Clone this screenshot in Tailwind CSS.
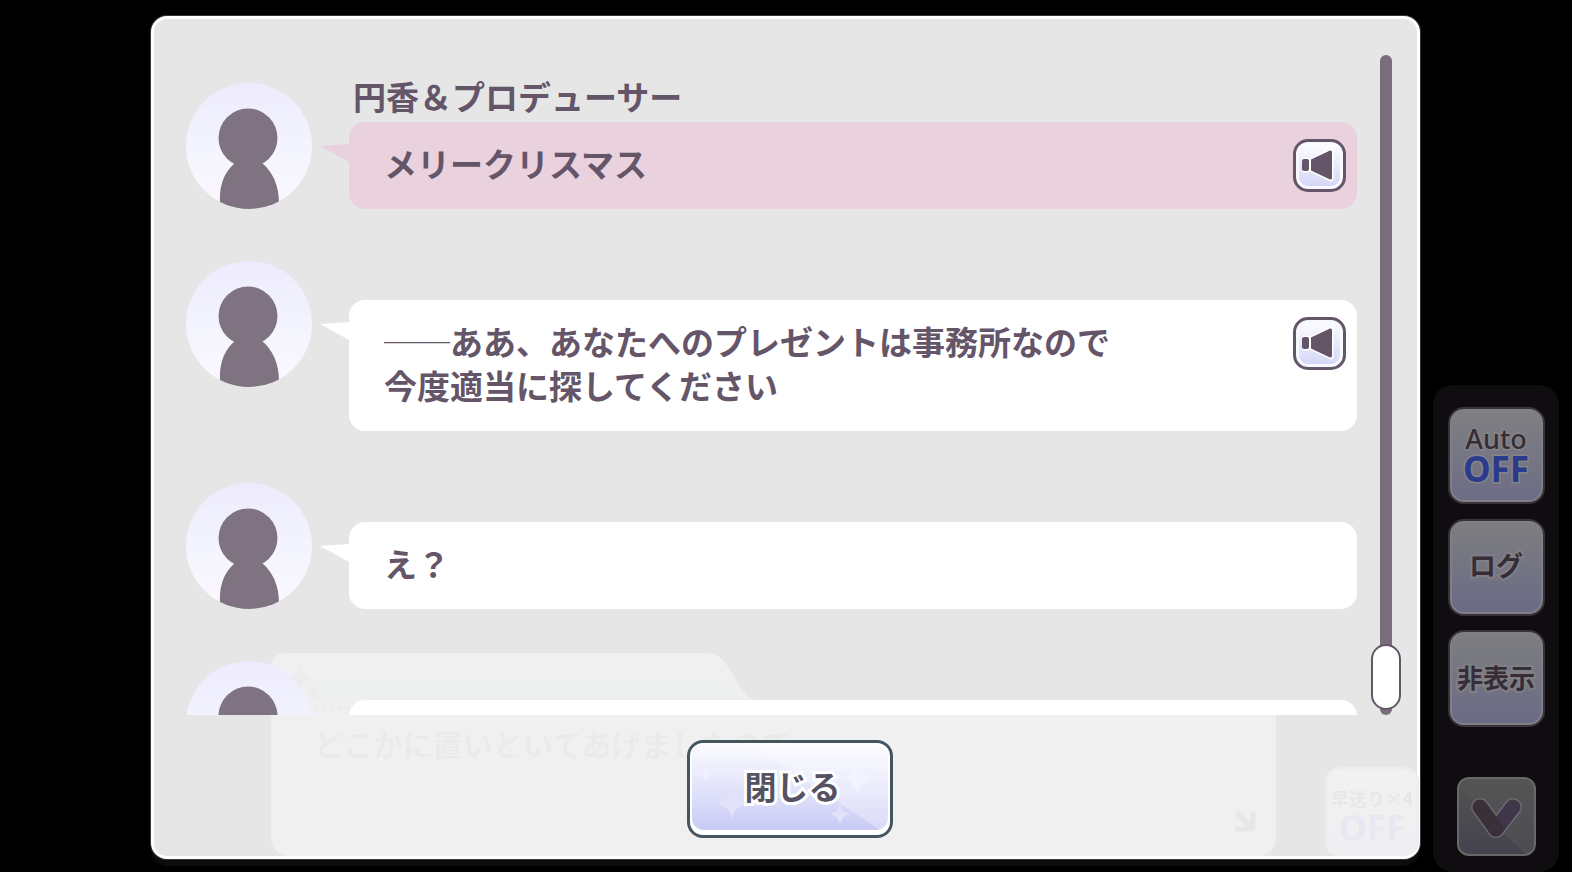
<!DOCTYPE html>
<html lang="ja">
<head>
  <meta charset="UTF-8" />
  <meta name="viewport" content="width=device-width, initial-scale=1.0"/>
  <title>ログ</title>
  <script src="https://cdn.jsdelivr.net/npm/@tailwindcss/browser@4"></script>
</head>
<body class="bg-black text-[#655568] font-['Noto_Sans_CJK_JP',sans-serif]">

  <!-- Shared shapes -->
  <svg class="absolute size-0" aria-hidden="true">
    <defs>
      <linearGradient id="avatar-bg" x1="0" y1="0" x2="0" y2="1">
        <stop offset="0" stop-color="#edebfd" />
        <stop offset="0.5" stop-color="#f3f4fe" />
        <stop offset="1" stop-color="#fcf8fe" />
      </linearGradient>
      <clipPath id="avatar-clip"><circle cx="63" cy="63" r="63" /></clipPath>
    </defs>
    <symbol id="avatar" viewBox="0 0 126 126">
      <circle cx="63" cy="63" r="63" fill="url(#avatar-bg)" />
      <g clip-path="url(#avatar-clip)" fill="#7f7281">
        <circle cx="62" cy="55" r="29.5" />
        <path d="M49 80C38 89 33 103 34 120V126H93V120C93 103 87 89 76 80Z" />
      </g>
    </symbol>
    <symbol id="tail" viewBox="0 0 29 18">
      <path d="M0 2L29 0V18Z" />
    </symbol>
    <symbol id="speaker" viewBox="0 0 36 36">
      <g stroke="#fff" stroke-width="5" stroke-linejoin="round" fill="#fff">
        <rect x="2" y="12" width="4" height="10" rx="1" />
        <path d="M10 12L29 3V31L10 22Z" />
      </g>
      <rect x="0" y="11" width="7" height="12" rx="2" fill="#655568" />
      <path d="M9 12Q9 11 10 11L28 2.500Q30 2 30 4V30Q30 32 28 31.500L10 23Q9 23 9 22Z" fill="#655568" />
    </symbol>
    <symbol id="sparkle" viewBox="0 0 24 24">
      <path d="M12 0Q14 10 24 12Q14 14 12 24Q10 14 0 12Q10 10 12 0Z" />
    </symbol>
  </svg>

  <div class="flex h-screen gap-[13px] pl-[151px] pr-[13px] overflow-hidden">

    <!-- Log dialog -->
    <main class="relative flex-1 min-w-0 flex flex-col mt-4 mb-[13px] rounded-2xl border-3 border-white bg-[#e6e6e6] shadow-[0_0_0_1px_#3c323e,0_7px_0_#0c0c0d]">

      <!-- Talk window showing through the dialog -->
      <div class="absolute inset-x-0 bottom-0 pl-[117px] pr-[141px] text-[#eaeaea]" aria-hidden="true">
        <svg class="block w-[484px] h-[47px]" viewBox="0 0 484 47">
          <path d="M0 47V16Q0 0 16 0H434Q448 0 455 11L472 38Q477 45 484 47Z" fill="#f0f0f0" />
          <path d="M20 40Q36 22 60 26H462L472 38Q477 45 484 47H20Z" fill="#eef0ef" />
          <use href="#sparkle" x="17" y="13" width="24" height="24" fill="#ececec" />
          <use href="#sparkle" x="35" y="34" width="14" height="14" fill="#ececec" />
        </svg>
        <div class="relative h-[156px] rounded-b-[18px] bg-[#f0f0f0] pl-[43px] pt-[5px]">
          <div class="w-[300px] border-t-4 border-dotted border-[#eaeaea]"></div>
          <p class="pt-3 text-[30px] leading-[44px] font-medium">どこかに置いといてあげましたので</p>
          <svg class="absolute right-5 bottom-6 size-[22px]" viewBox="0 0 22 22" fill="none" stroke="#e7e7e7" stroke-width="5" stroke-linecap="round" stroke-linejoin="round">
            <path d="M4 4L17 17M19 4V19H3" />
          </svg>
        </div>
      </div>
      <div class="absolute -right-0.5 -bottom-2 h-[97px] w-[94px] rounded-[14px] border-2 border-[#ececec] bg-linear-to-b from-[#f1f1f1] to-[#efeff2] pt-3.5 text-center font-bold [clip-path:inset(0_0_8px_0_round_14px)]" aria-hidden="true">
        <div class="text-[18px] leading-[30px] font-medium whitespace-nowrap text-[#e6e6e6]">早送り×4</div>
        <div class="text-[35px] leading-[30px] font-['Noto_Sans',sans-serif] text-[#e7e8f2]">OFF</div>
      </div>

      <!-- Messages and scrollbar -->
      <div class="relative flex-1 min-h-0 flex gap-3.5 pl-8 pr-4">
        <ul id="log" class="flex-1 min-w-0 overflow-hidden pt-16 space-y-[52px] text-[33px] leading-[44px] font-bold">
          <li class="flex gap-[37px]">
            <svg class="size-[126px] shrink-0"><use href="#avatar" /></svg>
            <div class="flex-1">
              <h2 class="h-[39px] pl-1 leading-[26px]">円香＆プロデューサー</h2>
              <div class="relative flex justify-between rounded-2xl bg-[#ead1de] pt-[19px] pb-6 pl-[35px] pr-[11px]">
                <svg class="absolute right-full top-[22px] w-[29px] h-[18px] fill-[#ead1de]"><use href="#tail" /></svg>
                <p>メリークリスマス</p>
                <button type="button" aria-label="音声再生" class="-mt-0.5 -mb-5 flex size-[53px] items-center justify-center rounded-[15px] border-[3px] border-[#655568] bg-linear-to-b from-white to-[#d3d4f7] shadow-[inset_0_0_0_3px_#f8f8ff]">
                  <svg class="size-9"><use href="#speaker" /></svg>
                </button>
              </div>
            </div>
          </li>
          <li class="flex gap-[37px]">
            <svg class="size-[126px] shrink-0"><use href="#avatar" /></svg>
            <div class="flex-1 pt-[39px]">
              <div class="relative flex justify-between rounded-2xl bg-white pt-[19px] pb-6 pl-[35px] pr-[11px]">
                <svg class="absolute right-full top-[22px] w-[29px] h-[18px] fill-white"><use href="#tail" /></svg>
                <p><span class="font-light">──</span>ああ、あなたへのプレゼントは事務所なので<br>今度適当に探してください</p>
                <button type="button" aria-label="音声再生" class="-mt-0.5 -mb-5 flex size-[53px] items-center justify-center rounded-[15px] border-[3px] border-[#655568] bg-linear-to-b from-white to-[#d3d4f7] shadow-[inset_0_0_0_3px_#f8f8ff]">
                  <svg class="size-9"><use href="#speaker" /></svg>
                </button>
              </div>
            </div>
          </li>
          <li class="flex gap-[37px]">
            <svg class="size-[126px] shrink-0"><use href="#avatar" /></svg>
            <div class="flex-1 pt-[39px]">
              <div class="relative rounded-2xl bg-white pt-[19px] pb-6 pl-[35px] pr-[11px]">
                <svg class="absolute right-full top-[22px] w-[29px] h-[18px] fill-white"><use href="#tail" /></svg>
                <p>え？</p>
              </div>
            </div>
          </li>
          <li class="flex gap-[37px]">
            <svg class="size-[126px] shrink-0"><use href="#avatar" /></svg>
            <div class="flex-1 pt-[39px]">
              <div class="h-[87px] rounded-2xl bg-white"></div>
            </div>
          </li>
        </ul>

        <div role="scrollbar" aria-orientation="vertical" aria-valuenow="98" aria-controls="log" class="mt-9 flex w-[30px] flex-col items-center">
          <div class="w-3 flex-1 rounded-full bg-[#7a6d7b]"></div>
          <div class="-mt-[71px] mb-[5px] h-[66px] w-[30px] rounded-full border-2 border-[#655568] bg-white"></div>
        </div>
      </div>

      <div class="relative flex justify-center pt-[25px] pb-[18px] pl-2">
        <button type="button" class="relative h-[98px] w-[206px] overflow-hidden rounded-2xl border-[3px] border-[#465660] bg-white p-0.5 pb-[5px] text-[32px] leading-none font-bold text-[#555262]">
          <span class="relative flex h-full items-center justify-center rounded-xl bg-linear-to-b from-[#fafaff] via-[#e3e4fb] to-[#c9caf4] pb-1.5 pl-1.5">
            <svg class="absolute inset-0 size-full" viewBox="0 0 196 85" preserveAspectRatio="none">
              <path d="M60 0H196V85H188Z" fill="#fff" opacity="0.3" />
              <use href="#sparkle" x="24" y="42" width="32" height="32" fill="#e2e3fa" />
              <use href="#sparkle" x="138" y="59" width="20" height="20" fill="#e2e3fa" />
              <use href="#sparkle" x="150" y="17" width="32" height="32" fill="#f4f4fe" />
              <use href="#sparkle" x="8" y="24" width="12" height="12" fill="#f0f0fe" />
            </svg>
            <span class="relative [-webkit-text-stroke:6px_#fff] [paint-order:stroke_fill]">閉じる</span>
          </span>
        </button>
      </div>
    </main>

    <!-- Side menu, dimmed behind the dialog -->
    <nav class="flex w-[126px] flex-col items-center self-end rounded-[20px] bg-[#100d10] pt-[22px] pb-4 font-bold text-[#362d38]">
      <button type="button" class="flex h-[97px] w-[97px] flex-col items-center justify-center rounded-2xl border-2 border-[#3a313b] bg-linear-to-b from-[#808082] to-[#6c6c86] pb-1 shadow-[inset_0_0_0_2px_#808084]">
        <span class="font-['Noto_Sans',sans-serif] text-[27px] leading-[30px] font-medium [-webkit-text-stroke:3px_#858585] [paint-order:stroke_fill]">Auto</span>
        <span class="font-['Noto_Sans',sans-serif] text-[35px] leading-[30px] text-[#2b3a8c] [-webkit-text-stroke:3px_#858585] [paint-order:stroke_fill]">OFF</span>
      </button>
      <button type="button" class="mt-[15px] h-[97px] w-[97px] rounded-2xl border-2 border-[#3a313b] bg-linear-to-b from-[#7e7e80] to-[#6a6a86] pb-1 text-[27px] shadow-[inset_0_0_0_2px_#808084]">
        <span class="[-webkit-text-stroke:4px_#808084] [paint-order:stroke_fill]">ログ</span>
      </button>
      <button type="button" class="mt-3.5 h-[97px] w-[97px] rounded-2xl border-2 border-[#3a313b] bg-linear-to-b from-[#7e7e80] to-[#6a6a86] pb-1 text-[26px] whitespace-nowrap shadow-[inset_0_0_0_2px_#808084]">
        <span class="[-webkit-text-stroke:4px_#808084] [paint-order:stroke_fill]">非表示</span>
      </button>
      <button type="button" aria-label="メニューを閉じる" class="mt-[50px] size-[79px] overflow-hidden rounded-xl border-2 border-[#68686a] bg-linear-to-b from-[#535353] to-[#44434f]">
        <svg class="size-full" viewBox="0 0 75 75" fill="none" stroke-linecap="round" stroke-linejoin="round">
          <path d="M0 10L66 75H75V0H0Z" fill="#555" opacity="0.5" />
          <path d="M21 28L37 50L54 28" stroke="#6c6a6e" stroke-width="18" />
          <path d="M54 28L37 50" stroke="#40364a" stroke-width="15" />
          <path d="M21 28L37 50" stroke="#393039" stroke-width="15" />
        </svg>
      </button>
    </nav>
  </div>
</body>
</html>
